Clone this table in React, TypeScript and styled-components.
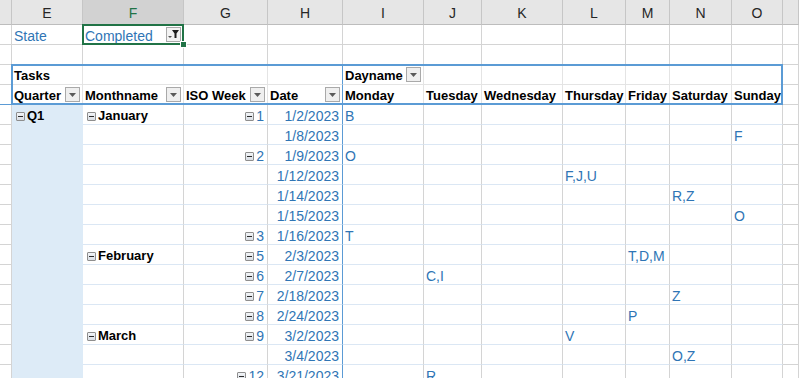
import React from 'react';
import styled, { createGlobalStyle } from 'styled-components';

const GRID = '#d4d4d4';
const HEAD_LINE = '#e4e4e4';
const PIVOT_LINE = '#dbe7f4';
const PIVOT_BLUE = '#5b9bd5';
const Q_FILL = '#ddebf7';
const TEXT_BLUE = '#2f75b5';

const COLUMNS = ['D', 'E', 'F', 'G', 'H', 'I', 'J', 'K', 'L', 'M', 'N', 'O', 'P'];
const DAYS = ['Monday', 'Tuesday', 'Wednesday', 'Thursday', 'Friday', 'Saturday', 'Sunday'];

interface BodyRow {
  quarter?: string;
  month?: string;
  week?: string;
  date: string;
  day: number;
  value: string;
}

const bodyRows: BodyRow[] = [
  { quarter: 'Q1', month: 'January', week: '1', date: '1/2/2023', day: 0, value: 'B' },
  { date: '1/8/2023', day: 6, value: 'F' },
  { week: '2', date: '1/9/2023', day: 0, value: 'O' },
  { date: '1/12/2023', day: 3, value: 'F,J,U' },
  { date: '1/14/2023', day: 5, value: 'R,Z' },
  { date: '1/15/2023', day: 6, value: 'O' },
  { week: '3', date: '1/16/2023', day: 0, value: 'T' },
  { month: 'February', week: '5', date: '2/3/2023', day: 4, value: 'T,D,M' },
  { week: '6', date: '2/7/2023', day: 1, value: 'C,I' },
  { week: '7', date: '2/18/2023', day: 5, value: 'Z' },
  { week: '8', date: '2/24/2023', day: 4, value: 'P' },
  { month: 'March', week: '9', date: '3/2/2023', day: 3, value: 'V' },
  { date: '3/4/2023', day: 5, value: 'O,Z' },
  { week: '12', date: '3/21/2023', day: 1, value: 'R' },
];

const GlobalStyle = createGlobalStyle`
  html, body {
    margin: 0;
    padding: 0;
    background: #ffffff;
  }
`;

const Sheet = styled.div`
  display: grid;
  grid-template-columns: 12px 71px 101px 84px 75px 81px 58px 81px 63px 44px 62px 51px 1fr;
  grid-template-rows: 25px;
  grid-auto-rows: 20px;
  width: 100%;
  height: 378px;
  overflow: hidden;
  font-family: 'Liberation Sans', Arial, sans-serif;
  font-size: 14px;
  background: #ffffff;
`;

const ColHeader = styled.div<{ $col: number; $selected?: boolean }>`
  grid-row: 1;
  grid-column: ${(p) => p.$col};
  display: flex;
  align-items: center;
  justify-content: center;
  box-sizing: border-box;
  padding-top: 2px;
  background: ${(p) => (p.$selected ? '#d2d2d2' : '#e6e6e6')};
  color: ${(p) => (p.$selected ? '#217346' : '#262626')};
  border-right: 1px solid #c6c6c6;
  border-bottom: 1px solid #bdbdbd;
  font-size: 14px;
`;

interface CellProps {
  $row: number;
  $col: number;
  $right?: string;
  $bottom?: string;
  $bg?: string;
  $align?: 'left' | 'right' | 'between';
  $bold?: boolean;
  $blue?: boolean;
}

const Cell = styled.div<CellProps>`
  grid-row: ${(p) => p.$row};
  grid-column: ${(p) => p.$col};
  display: flex;
  align-items: flex-end;
  justify-content: ${(p) => (p.$align === 'right' ? 'flex-end' : p.$align === 'between' ? 'space-between' : 'flex-start')};
  box-sizing: border-box;
  padding: 0 3px 0 2px;
  min-width: 0;
  overflow: visible;
  white-space: nowrap;
  line-height: 16px;
  background: ${(p) => p.$bg || 'transparent'};
  border-right: 1px solid ${(p) => p.$right || GRID};
  border-bottom: 1px solid ${(p) => p.$bottom || GRID};
  font-weight: ${(p) => (p.$bold ? 700 : 400)};
  font-size: ${(p) => (p.$bold ? '13px' : '14px')};
  color: ${(p) => (p.$blue ? TEXT_BLUE : '#000000')};
`;

const Label = styled.span`
  display: inline-flex;
  align-items: flex-end;
`;

const Dropdown = styled.span`
  display: inline-flex;
  align-items: center;
  justify-content: center;
  width: 15px;
  height: 15px;
  box-sizing: border-box;
  margin: 0 -1px 2px 0;
  border: 1px solid #a9a9a9;
  background: #efefef;
`;

const FilterButton = styled.span`
  display: inline-flex;
  align-items: center;
  justify-content: center;
  width: 15px;
  height: 15px;
  box-sizing: border-box;
  margin: 0 -1px 2px 0;
  border: 1px solid #a9a9a9;
  background: #f3f3f3;
`;

const Toggle = styled.span`
  position: relative;
  display: inline-block;
  width: 9px;
  height: 9px;
  box-sizing: border-box;
  margin: 0 2px 3px 2px;
  border: 1px solid #8e8e8e;
  border-radius: 1px;
  background: linear-gradient(#f2f4f7, #d9dee5);

  &::after {
    content: '';
    position: absolute;
    left: 1px;
    right: 1px;
    top: 3px;
    height: 1px;
    background: #2b2b2b;
  }
`;

const PivotFrame = styled.div`
  grid-row: 4 / 6;
  grid-column: 2 / 13;
  margin: -1px 0 0 -1px;
  border: 2px solid ${PIVOT_BLUE};
  pointer-events: none;
  z-index: 2;
`;

const Selection = styled.div`
  position: relative;
  grid-row: 2;
  grid-column: 3;
  margin: -1px 0 0 -1px;
  border: 2px solid #217346;
  pointer-events: none;
  z-index: 3;
`;

const Handle = styled.span`
  position: absolute;
  right: -5px;
  bottom: -5px;
  width: 5px;
  height: 5px;
  background: #217346;
  border: 1px solid #ffffff;
`;

const Caret = () => (
  <svg width="7" height="4" viewBox="0 0 7 4">
    <polygon points="0,0 7,0 3.5,4" fill="#5a5a5a" />
  </svg>
);

const FunnelIcon = () => (
  <svg width="13" height="13" viewBox="0 0 13 13">
    <polygon points="1,8 5,8 3,10" fill="#555555" />
    <polygon points="5,2 12,2 9.5,5.5 9.5,10 7.5,10 7.5,5.5" fill="#1f1f1f" />
  </svg>
);

const App = () => {
  const cells: React.ReactNode[] = [];

  // row 1: report filter, row 2: empty
  for (let c = 1; c <= 13; c++) {
    let content: React.ReactNode = null;
    let align: CellProps['$align'] = 'left';
    if (c === 2) content = 'State';
    if (c === 3) {
      content = (
        <>
          <Label>Completed</Label>
          <FilterButton>
            <FunnelIcon />
          </FilterButton>
        </>
      );
      align = 'between';
    }
    cells.push(
      <Cell key={`r2-${c}`} $row={2} $col={c} $blue $align={align}>
        {content}
      </Cell>
    );
    cells.push(<Cell key={`r3-${c}`} $row={3} $col={c} />);
  }

  // pivot header rows
  for (let c = 1; c <= 13; c++) {
    const inPivot = c >= 2 && c <= 12;
    const right = c === 5 ? PIVOT_BLUE : inPivot ? HEAD_LINE : GRID;
    const bottom = inPivot ? HEAD_LINE : GRID;

    let top: React.ReactNode = null;
    let topAlign: CellProps['$align'] = 'left';
    if (c === 2) top = 'Tasks';
    if (c === 6) {
      top = (
        <>
          <Label>Dayname</Label>
          <Dropdown>
            <Caret />
          </Dropdown>
        </>
      );
      topAlign = 'between';
    }
    cells.push(
      <Cell key={`r4-${c}`} $row={4} $col={c} $right={right} $bottom={bottom} $bold $align={topAlign}>
        {top}
      </Cell>
    );

    let label: React.ReactNode = null;
    let align: CellProps['$align'] = 'left';
    const fields: Record<number, string> = { 2: 'Quarter', 3: 'Monthname', 4: 'ISO Week', 5: 'Date' };
    if (fields[c]) {
      label = (
        <>
          <Label>{fields[c]}</Label>
          <Dropdown>
            <Caret />
          </Dropdown>
        </>
      );
      align = 'between';
    } else if (c >= 6 && c <= 12) {
      label = DAYS[c - 6];
    }
    cells.push(
      <Cell key={`r5-${c}`} $row={5} $col={c} $right={right} $bottom={c === 13 ? GRID : PIVOT_BLUE} $bold $align={align}>
        {label}
      </Cell>
    );
  }

  // pivot body
  bodyRows.forEach((r, i) => {
    const row = 6 + i;
    cells.push(<Cell key={`b${row}-1`} $row={row} $col={1} />);
    cells.push(
      <Cell key={`b${row}-2`} $row={row} $col={2} $bg={Q_FILL} $right={Q_FILL} $bottom={Q_FILL} $bold>
        {r.quarter && (
          <>
            <Toggle />
            <Label>{r.quarter}</Label>
          </>
        )}
      </Cell>
    );
    cells.push(
      <Cell key={`b${row}-3`} $row={row} $col={3} $bottom={PIVOT_LINE} $bold>
        {r.month && (
          <>
            <Toggle />
            <Label>{r.month}</Label>
          </>
        )}
      </Cell>
    );
    cells.push(
      <Cell key={`b${row}-4`} $row={row} $col={4} $bottom={PIVOT_LINE} $align="right" $blue>
        {r.week && (
          <>
            <Toggle />
            <Label>{r.week}</Label>
          </>
        )}
      </Cell>
    );
    cells.push(
      <Cell key={`b${row}-5`} $row={row} $col={5} $bottom={PIVOT_LINE} $right={PIVOT_BLUE} $align="right" $blue>
        {r.date}
      </Cell>
    );
    for (let d = 0; d < 7; d++) {
      cells.push(
        <Cell key={`b${row}-${6 + d}`} $row={row} $col={6 + d} $bottom={PIVOT_LINE} $blue>
          {r.day === d ? r.value : null}
        </Cell>
      );
    }
    cells.push(<Cell key={`b${row}-13`} $row={row} $col={13} />);
  });

  return (
    <>
      <GlobalStyle />
      <Sheet>
        {COLUMNS.map((name, i) => (
          <ColHeader key={name} $col={i + 1} $selected={name === 'F'}>
            {name === 'D' || name === 'P' ? '' : name}
          </ColHeader>
        ))}
        {cells}
        <PivotFrame />
        <Selection>
          <Handle />
        </Selection>
      </Sheet>
    </>
  );
};

export default App;
